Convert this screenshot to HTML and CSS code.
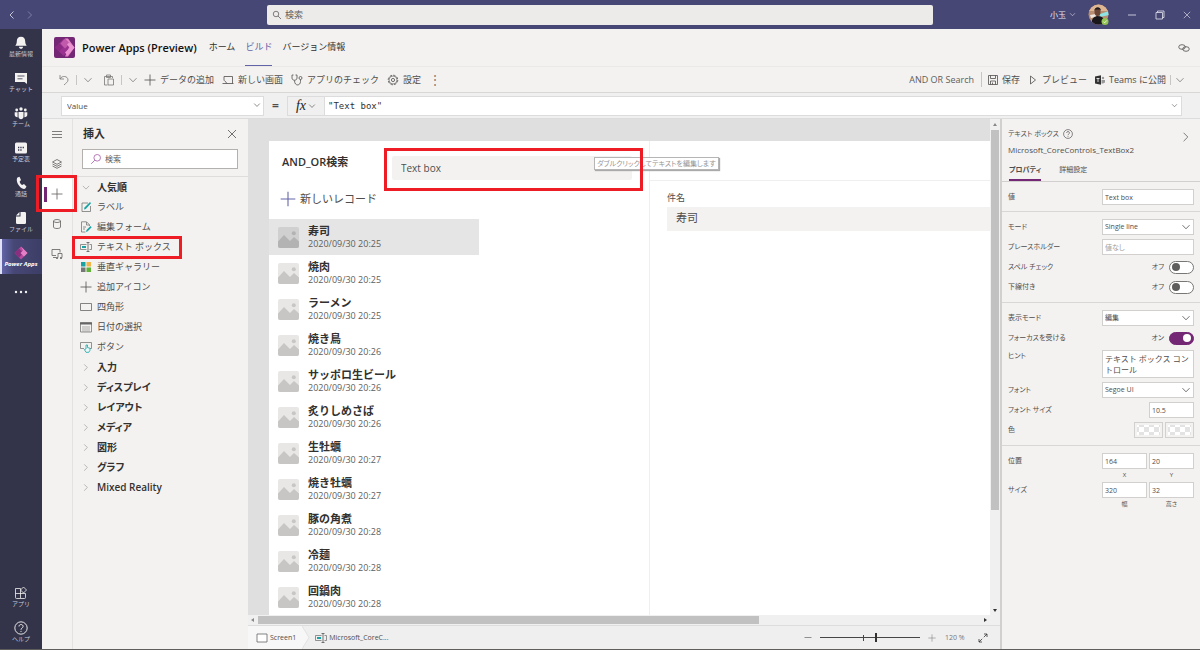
FILE: index.html
```html
<!DOCTYPE html>
<html lang="ja">
	<head>
		<meta charset="utf-8">
		<title>Power Apps (Preview)</title>
		<link rel="stylesheet" href="styles.css">
	</head>
	<body>
		<!-- shared icons -->
		<svg class="defs" aria-hidden="true">
			<symbol id="chevDown" viewBox="0 0 10 10"><path d="M1.5 3.2 5 6.8l3.5-3.6" fill="none" stroke="currentColor"/></symbol>
			<symbol id="chevRight" viewBox="0 0 10 10"><path d="M3 1.5 6.5 5 3 8.5" fill="none" stroke="currentColor"/></symbol>
			<symbol id="chevLeft" viewBox="0 0 10 10"><path d="M6.5 1.5 3 5l3.5 3.5" fill="none" stroke="currentColor"/></symbol>
			<symbol id="plus" viewBox="0 0 12 12"><path d="M6 .5v11M.5 6h11" fill="none" stroke="currentColor"/></symbol>
			<symbol id="close" viewBox="0 0 10 10"><path d="m1 1 8 8M9 1 1 9" fill="none" stroke="currentColor"/></symbol>
			<symbol id="search" viewBox="0 0 12 12"><circle cx="4.8" cy="4.8" r="3.3" fill="none" stroke="currentColor"/><path d="m7.2 7.2 3.6 3.6" stroke="currentColor"/></symbol>
			<symbol id="help" viewBox="0 0 12 12"><circle cx="6" cy="6" r="5.3" fill="none" stroke="currentColor"/><path d="M4.3 4.7c0-2.3 3.5-2.2 3.5 0C7.8 6 6 5.9 6 7.5M6 8.5v.9" fill="none" stroke="currentColor"/></symbol>
			<symbol id="textbox" viewBox="0 0 12 10"><path d="M6.5 2.5H.5v5h6M9.500 2.500h2v5h-2" fill="none" stroke="#777"/><path d="M6.5.5h3M6.5 9.5h3M8 .5v9" stroke="#555"/><path d="M2 4h4v2H2z" fill="#1ba3a3"/></symbol>
			<symbol id="picture" viewBox="0 0 21 21"><rect width="21" height="21" rx="2" fill="currentColor" opacity=".42"/><path d="M0 14.5 6 8l6 6 4-4 5 4.5V19q0 2-2 2H2q-2 0-2-2z" fill="currentColor"/><circle cx="15.800" cy="6.300" r="2" fill="currentColor"/></symbol>
		</svg>

		<header id="titlebar">
			<div class="history">
				<button aria-label="戻る"><svg class="ic10"><use href="#chevLeft"/></svg></button>
				<button class="dim" aria-label="進む"><svg class="ic10"><use href="#chevRight"/></svg></button>
			</div>
			<label class="topSearch">
				<svg class="ic10"><use href="#search"/></svg>
				<input type="text" placeholder="検索" aria-label="検索">
			</label>
			<div class="account">
				<button class="user">小玉 <svg class="ic7"><use href="#chevDown"/></svg></button>
				<svg class="avatar" viewBox="0 0 21 21">
					<clipPath id="face"><circle cx="10.5" cy="10.5" r="10"/></clipPath>
					<g clip-path="url(#face)">
						<path d="M0 0h21v21H0z" fill="#b98f74"/><path d="M0 0h21v7H0z" fill="#dfb692"/>
						<path d="M12 10l9-3v4l-9 2z" fill="#8ee4e4"/><path d="M2 11l6-1v3l-5 1z" fill="#efe7df"/>
						<path d="M4 21c-1-7 2-8 5-9 6 0 8 3 8 9z" fill="#19171c"/>
						<ellipse cx="9.5" cy="8" rx="3" ry="4" fill="#6b4637"/><path d="M6.300 7c0-5 7-5 6.500 0l-1-1.500H7.500z" fill="#201a1c"/>
					</g>
					<circle cx="17" cy="17.5" r="3.5" fill="#92c353"/><path d="m15.300 17.500 1.300 1.300 2.200-2.400" fill="none" stroke="#fff"/>
				</svg>
				<button aria-label="最小化"><svg class="ic10" viewBox="0 0 10 10"><path d="M1 5h8" stroke="currentColor"/></svg></button>
				<button aria-label="元に戻す"><svg class="ic10" viewBox="0 0 10 10"><path d="M1 2.500h6.500V9H1zM2.500 2.500V1H9v6.500H7.500" fill="none" stroke="currentColor"/></svg></button>
				<button aria-label="閉じる"><svg class="ic8"><use href="#close"/></svg></button>
			</div>
		</header>

		<div id="shell">
			<nav id="rail">
				<a href="#"><svg viewBox="0 0 14 14"><path d="M7 .8c-2.800 0-4.200 2-4.200 4.500 0 2-.5 3-1.500 4.500h11.400c-1-1.500-1.500-2.500-1.500-4.500C11.200 2.800 9.800.8 7 .8zM5 10.800h4c0 2.700-4 2.700-4 0z" fill="currentColor"/></svg>最新情報</a>
				<a href="#"><svg viewBox="0 0 14 14"><path d="M1 2h12v11l-2.500-2H1z" fill="currentColor"/><path d="M3.500 5h7M3.500 7.800h5" stroke="#33344a"/></svg>チャット</a>
				<a href="#"><svg viewBox="0 0 14 14"><g fill="currentColor"><circle cx="7" cy="3" r="1.700"/><circle cx="2.700" cy="4" r="1.400"/><circle cx="11.300" cy="4" r="1.400"/><path d="M4.500 6h5v4.500c0 3.500-5 3.500-5 0zM.7 6.300h2.900v5C1.800 11.300.7 10 .7 8.800zM10.400 6.300h2.900v2.500c0 1.200-1.100 2.500-2.900 2.500z"/></g></svg>チーム</a>
				<a href="#"><svg viewBox="0 0 14 14"><rect x="1" y="1.500" width="12" height="11" rx="1.500" fill="currentColor"/><path d="M4 6.500h6M4 9h4" stroke="#33344a" stroke-width="1.500" stroke-dasharray="1.300 1"/></svg>予定表</a>
				<a href="#"><svg viewBox="0 0 14 14"><path d="m3.500 1.500 2-.8 1.500 3.300-1.400 1.700c.5 1.500 1.300 2.600 2.600 3.300L10 8l2.500 2.500-1.200 2c-1.300 1-3.800 0-5.800-2.300C3 7.500 2 3.200 3.500 1.500z" fill="currentColor"/></svg>通話</a>
				<a href="#"><svg viewBox="0 0 14 14"><path d="M6.500 1h4.200q1.300 0 1.300 1.300v9.400q0 1.300-1.300 1.300H3.300Q2 13 2 11.700V5.500h4.500zM5.500 1v3.500H2z" fill="currentColor"/></svg>ファイル</a>
				<a href="#" class="active"><svg viewBox="0 0 14 14"><path d="M7 .5 13.500 7 7 13.500.5 7z" fill="#b94aa0"/><path d="M5 2.500 9.500 7 5 11.500.5 7z" fill="#8a2f80"/><path d="M7 .5 13.500 7 10 10.500 6.500 7 9 4.500z" fill="#e27fc5"/></svg>Power Apps</a>
				<a href="#" aria-label="その他"><svg viewBox="0 0 14 14"><g fill="currentColor"><circle cx="2" cy="11" r="1.200"/><circle cx="7" cy="11" r="1.200"/><circle cx="12" cy="11" r="1.200"/></g></svg></a>
				<div class="spacer"></div>
				<a href="#"><svg viewBox="0 0 14 14"><path d="M1.500 2.500h5v10h-4q-1 0-1-1zM1.500 7.500h10v4q0 1-1 1h-4M9.500 1l3 3-3 3-3-3z" fill="none" stroke="currentColor"/></svg>アプリ</a>
				<a href="#"><svg><use href="#help"/></svg>ヘルプ</a>
			</nav>

			<div id="app">
				<div id="appHeader">
					<svg class="logo" viewBox="0 0 21 21"><rect width="21" height="21" rx="2" fill="#742774"/><path d="M9.500 2 18 10.500 9.500 19 1 10.500z" fill="#9a3390"/><path d="m1 10.500 4-4 4 4-4 4z" fill="#8a2a82"/><path d="M11 1.500h3l6.500 9-6.500 9h-3l4-9z" fill="#e583c9"/><path d="m11 1.500 5 5-5 5-4.500-5z" fill="#c25aac"/><path d="m15 5.500 5.500 5-7 8-2.500-3 5-5-3-3z" fill="#eb94d2"/></svg>
					<h1>Power Apps (Preview)</h1>
					<nav class="tabs">
						<a href="#">ホーム</a>
						<a href="#" class="current">ビルド</a>
						<a href="#">バージョン情報</a>
					</nav>
					<button class="link" aria-label="リンクのコピー"><svg class="ic12" viewBox="0 0 12 12"><g fill="none" stroke="currentColor"><ellipse cx="4" cy="5" rx="3.300" ry="2.300"/><ellipse cx="8" cy="7" rx="3.300" ry="2.300"/></g></svg></button>
				</div>

				<div id="toolbar">
					<button aria-label="元に戻す"><svg class="ic12" viewBox="0 0 12 12"><path d="M2 1v4h4M2 5c2-4 8-3 8 1 0 2-2 3-4 5" fill="none" stroke="currentColor"/></svg></button>
					<i></i>
					<button aria-label="元に戻すの一覧"><svg class="ic10"><use href="#chevDown"/></svg></button>
					<button class="paste" aria-label="貼り付け"><svg class="ic12" viewBox="0 0 12 12"><path d="M4.500 11H1.500V2.500h8V4M3.500 1h4v2.500h-4zM5 5h5.500v6H5z" fill="none" stroke="currentColor"/></svg></button>
					<i></i>
					<button aria-label="貼り付けの一覧"><svg class="ic10"><use href="#chevDown"/></svg></button>
					<button class="cmd"><svg class="ic12"><use href="#plus"/></svg>データの追加</button>
					<button class="cmd"><svg class="ic12" viewBox="0 0 12 12"><path d="M2 6.500v-4h8.500v7M.5 9.500h4.500L2.500 6.500M5 9.500h6.500" fill="none" stroke="currentColor"/></svg>新しい画面</button>
					<button class="cmd"><svg class="ic12" viewBox="0 0 12 12"><path d="M2.500 1H1v3c0 3 5 3 5 0V1H4.500M3.500 6.500c0 6 6 5.500 6 1V5.500" fill="none" stroke="currentColor"/><circle cx="9.500" cy="4" r="1.500" fill="none" stroke="currentColor"/></svg>アプリのチェック</button>
					<button class="cmd"><svg class="ic12" viewBox="0 0 12 12"><circle cx="6" cy="6" r="4.800" fill="none" stroke="currentColor" stroke-dasharray="2.500 1.200"/><circle cx="6" cy="6" r="4" fill="none" stroke="currentColor" stroke-width=".6"/><circle cx="6" cy="6" r="1.600" fill="none" stroke="currentColor"/></svg>設定</button>
					<button class="more" aria-label="その他">⋮</button>
					<div class="spacer"></div>
					<span class="appName">AND OR Search</span>
					<i class="tall"></i>
					<button class="cmd"><svg class="ic10" viewBox="0 0 10 10"><path d="M.5.5h9v9h-9zM2.500.5v3h5v-3M2.500 9.500V6h5v3.500M4.500 7.500v2" fill="none" stroke="currentColor"/></svg>保存</button>
					<button class="cmd"><svg class="ic10" viewBox="0 0 10 10"><path d="M2.500 1v8l5-4z" fill="none" stroke="currentColor"/></svg>プレビュー</button>
					<button class="cmd publish"><svg class="ic10" viewBox="0 0 10 10"><path d="M0 1.500 6 .3v9.400L0 8.500z" fill="#333"/><path d="M1.500 3.500h3M3 3.500v3.500" stroke="#fff"/><circle cx="8" cy="3" r="1.200" fill="#999"/><path d="M6.500 5H10v2.500L8 8.500H6.500z" fill="#999"/></svg>Teams に公開</button>
					<i></i>
					<button aria-label="公開の一覧"><svg class="ic10"><use href="#chevDown"/></svg></button>
				</div>

				<div id="formulaBar">
					<span class="pick property"><select aria-label="プロパティ"><option>Value</option></select><svg class="ic8"><use href="#chevDown"/></svg></span>
					<b>=</b>
					<div class="formula">
						<button class="fx"><em>fx</em><svg class="ic8"><use href="#chevDown"/></svg></button>
						<input type="text" value="&quot;Text box&quot;" aria-label="数式">
						<svg class="ic7"><use href="#chevDown"/></svg>
					</div>
				</div>

				<div id="workspace">
					<nav id="tools">
						<button aria-label="メニュー"><svg class="ic12" viewBox="0 0 12 12"><path d="M1 3.500h10M1 6.500h10M1 9.500h10" stroke="currentColor"/></svg></button>
						<button aria-label="ツリー ビュー"><svg class="ic12" viewBox="0 0 12 12"><path d="M6 1.500 10.500 4 6 6.300 1.500 4zM1.500 6 6 8.300 10.500 6M1.500 8 6 10.300 10.500 8" fill="none" stroke="currentColor"/></svg></button>
						<button class="active" aria-label="挿入"><svg class="ic12"><use href="#plus"/></svg><span class="mark markPlus"></span></button>
						<button aria-label="データ"><svg class="ic12" viewBox="0 0 12 12"><path d="M2.500 3v6c0 2 7 2 7 0V3" fill="none" stroke="currentColor"/><ellipse cx="6" cy="3" rx="3.500" ry="1.500" fill="none" stroke="currentColor"/></svg></button>
						<button aria-label="メディア"><svg class="ic12" viewBox="0 0 12 12"><path d="M5 7.500H1v-6h8v3M2 9.500h3M7 9.500v-4h4v4" fill="none" stroke="currentColor"/><circle cx="6" cy="10" r="1" fill="currentColor"/><circle cx="10" cy="10" r="1" fill="currentColor"/></svg></button>
					</nav>

					<aside id="insertPanel">
						<div class="panelHead">
							<h2>挿入</h2>
							<button aria-label="閉じる"><svg class="ic10"><use href="#close"/></svg></button>
						</div>
						<label class="panelSearch">
							<svg class="ic12 flip"><use href="#search"/></svg>
							<input type="text" placeholder="検索" aria-label="コントロールの検索">
						</label>
						<ul>
							<li class="group"><button><svg><use href="#chevDown"/></svg>人気順</button></li>
							<li><button><svg viewBox="0 0 12 12"><path d="M8 2H2v8.500h8.500V5" fill="none" stroke="#777"/><path d="m4 8.500.5-2L10 1l1 1.200L5.800 8z" fill="#1ba3a3"/></svg>ラベル</button></li>
							<li><button><svg viewBox="0 0 12 12"><path d="M5.500 11H1.500V.8h5l3 3V5M6.500 1v3h3M3 6h3M3 8h2" fill="none" stroke="#777"/><path d="m6 11 .5-2L10.500 5l1.200 1.200-4 4z" fill="#1ba3a3"/></svg>編集フォーム</button></li>
							<li><button><svg><use href="#textbox"/></svg>テキスト ボックス</button><span class="mark markItem"></span></li>
							<li><button><svg viewBox="0 0 12 12"><path d="M1 1h4.500v4.500H1z" fill="#1ba3a3"/><path d="M6.500 1H11v4.500H6.500z" fill="#f4b548"/><path d="M1 6.500h4.500V11H1z" fill="#777"/><path d="M6.500 6.500H11V11H6.500z" fill="#5fb336"/></svg>垂直ギャラリー</button></li>
							<li><button><svg><use href="#plus"/></svg>追加アイコン</button></li>
							<li><button><svg viewBox="0 0 12 12"><path d="M.5 2.500h11v7H.5z" fill="none" stroke="#666"/></svg>四角形</button></li>
							<li><button><svg viewBox="0 0 12 12"><path d="M.5 1.500h11v9.500H.5z" fill="none" stroke="#777"/><path d="M0 2.500h12" stroke="#666" stroke-width="2"/><path d="M3 5v6M5 5v6M7 5v6M9 5v6" stroke="#999"/></svg>日付の選択</button></li>
							<li><button><svg viewBox="0 0 12 12"><path d="M4 7.500H.5v-6h11v6H10" fill="none" stroke="#777"/><path d="M6 8V4h1.500v2.500l2.500.8v2L8.800 11.300H6L4.300 8.500z" fill="#e9f8f8" stroke="#1ba3a3"/></svg>ボタン</button></li>
							<li class="group"><button><svg><use href="#chevRight"/></svg>入力</button></li>
							<li class="group"><button><svg><use href="#chevRight"/></svg>ディスプレイ</button></li>
							<li class="group"><button><svg><use href="#chevRight"/></svg>レイアウト</button></li>
							<li class="group"><button><svg><use href="#chevRight"/></svg>メディア</button></li>
							<li class="group"><button><svg><use href="#chevRight"/></svg>図形</button></li>
							<li class="group"><button><svg><use href="#chevRight"/></svg>グラフ</button></li>
							<li class="group"><button><svg><use href="#chevRight"/></svg>Mixed Reality</button></li>
						</ul>
					</aside>

					<main id="stage">
						<div id="canvas">
							<div class="screen">
								<section class="listPane">
									<div class="screenHead">
										<h3>AND_OR検索</h3>
										<div class="boxWrap">
											<input type="text" value="Text box" aria-label="Text box">
											<span class="tip">ダブルクリックしてテキストを編集します</span>
											<span class="mark markBox"></span>
										</div>
									</div>
									<button class="newRecord"><svg><use href="#plus"/></svg>新しいレコード</button>
									<ul class="records">
										<li class="selected"><svg><use href="#picture"/></svg><div><b>寿司</b><span>2020/09/30 20:25</span></div></li>
										<li><svg><use href="#picture"/></svg><div><b>焼肉</b><span>2020/09/30 20:25</span></div></li>
										<li><svg><use href="#picture"/></svg><div><b>ラーメン</b><span>2020/09/30 20:25</span></div></li>
										<li><svg><use href="#picture"/></svg><div><b>焼き鳥</b><span>2020/09/30 20:26</span></div></li>
										<li><svg><use href="#picture"/></svg><div><b>サッポロ生ビール</b><span>2020/09/30 20:26</span></div></li>
										<li><svg><use href="#picture"/></svg><div><b>炙りしめさば</b><span>2020/09/30 20:26</span></div></li>
										<li><svg><use href="#picture"/></svg><div><b>生牡蠣</b><span>2020/09/30 20:27</span></div></li>
										<li><svg><use href="#picture"/></svg><div><b>焼き牡蠣</b><span>2020/09/30 20:27</span></div></li>
										<li><svg><use href="#picture"/></svg><div><b>豚の角煮</b><span>2020/09/30 20:28</span></div></li>
										<li><svg><use href="#picture"/></svg><div><b>冷麺</b><span>2020/09/30 20:28</span></div></li>
										<li><svg><use href="#picture"/></svg><div><b>回鍋肉</b><span>2020/09/30 20:28</span></div></li>
									</ul>
								</section>
								<section class="formPane">
									<div class="formHead"></div>
									<div class="field">
										<label for="subject">件名</label>
										<input type="text" id="subject" value="寿司">
									</div>
								</section>
							</div>
							<div class="vbar"><span class="up"></span><div class="thumb"></div><span class="down"></span></div>
						</div>
						<div class="hbar"><span class="left"></span><div class="thumb"></div><span class="right"></span></div>
						<footer id="statusBar">
							<a href="#" class="crumb first"><svg viewBox="0 0 12 10"><path d="M1 1h10v8H1z" fill="#fff" stroke="#666"/></svg>Screen1</a>
							<svg class="crumbEnd" viewBox="0 0 8 23" preserveAspectRatio="none"><path d="M0 0l7 11.500L0 23z" fill="#f7f7f7"/><path d="m0 0 7 11.500L0 23" fill="none" stroke="#ddd"/></svg>
							<a href="#" class="crumb"><svg><use href="#textbox"/></svg>Microsoft_CoreC...</a>
							<div class="spacer"></div>
							<button aria-label="縮小"><svg class="ic8" viewBox="0 0 8 8"><path d="M.5 3.500h7" stroke="currentColor"/></svg></button>
							<div class="zoom"><input type="range" min="0" max="100" value="56" aria-label="ズーム"></div>
							<button aria-label="拡大"><svg class="ic8"><use href="#plus"/></svg></button>
							<span class="percent">120 %</span>
							<button class="fit" aria-label="ウィンドウに合わせる"><svg class="ic10" viewBox="0 0 10 10"><path d="M6 1h3v3M9 1 5.800 4.200M4 9H1V6M1 9l3.200-3.200" fill="none" stroke="#333"/></svg></button>
						</footer>
					</main>

					<aside id="props">
						<div class="propsHead">
							<div class="kind">テキスト ボックス <svg class="ic10"><use href="#help"/></svg></div>
							<div class="name">Microsoft_CoreControls_TextBox2</div>
							<button aria-label="折りたたむ"><svg class="ic12"><use href="#chevRight"/></svg></button>
						</div>
						<div class="propsTabs">
							<button class="current">プロパティ</button>
							<button>詳細設定</button>
						</div>
						<div class="section tight">
							<div class="row"><label for="pValue">値</label><input type="text" id="pValue" value="Text box"></div>
						</div>
						<div class="section">
							<div class="row"><label for="pMode">モード</label><span class="pick"><select id="pMode"><option>Single line</option></select><svg class="ic10"><use href="#chevDown"/></svg></span></div>
							<div class="row"><label for="pHolder">プレースホルダー</label><input type="text" id="pHolder" placeholder="値なし"></div>
							<div class="row"><label for="pSpell">スペル チェック</label><span class="state">オフ</span><input type="checkbox" id="pSpell"></div>
							<div class="row"><label for="pUnder">下線付き</label><span class="state">オフ</span><input type="checkbox" id="pUnder"></div>
						</div>
						<div class="section">
							<div class="row"><label for="pDisplay">表示モード</label><span class="pick"><select id="pDisplay"><option>編集</option></select><svg class="ic10"><use href="#chevDown"/></svg></span></div>
							<div class="row"><label for="pFocus">フォーカスを受ける</label><span class="state">オン</span><input type="checkbox" id="pFocus" checked></div>
							<div class="row hint"><label for="pHint">ヒント</label><textarea id="pHint">テキスト ボックス コントロール</textarea></div>
							<div class="row"><label for="pFont">フォント</label><span class="pick"><select id="pFont"><option>Segoe UI</option></select><svg class="ic10"><use href="#chevDown"/></svg></span></div>
							<div class="row"><label for="pSize">フォント サイズ</label><input type="text" class="half" id="pSize" value="10.5"></div>
							<div class="row"><span class="label">色</span><button class="swatch" aria-label="文字の色"></button><button class="swatch" aria-label="塗りつぶしの色"></button></div>
						</div>
						<div class="section last">
							<div class="row"><span class="label">位置</span><input type="text" class="half" id="pX" value="164"><input type="text" class="half" id="pY" value="20"></div>
							<div class="captions"><label for="pX">X</label><label for="pY">Y</label></div>
							<div class="row"><span class="label">サイズ</span><input type="text" class="half" id="pW" value="320"><input type="text" class="half" id="pH" value="32"></div>
							<div class="captions"><label for="pW">幅</label><label for="pH">高さ</label></div>
						</div>
					</aside>
				</div>
			</div>
		</div>
	</body>
</html>
```
FILE: styles.css
```css
*{
	box-sizing:border-box;
}

body{
	margin:0;
	height:100vh;
	display:flex;
	flex-direction:column;
	overflow:hidden;
	background:#f3f2f1;
	border-bottom:1px solid #605e5c;
	color:#504e4c;
	font:9px/12px "Open Sans", "Noto Sans CJK JP", sans-serif;
}

button, input, select, textarea{
	font:inherit;
	color:inherit;
	margin:0;
	padding:0;
	border:0;
	border-radius:0;
	background:none;
	outline:none;
	min-width:0;
}

button{
	display:flex;
	align-items:center;
	justify-content:center;
	white-space:nowrap;
}

select{
	appearance:none;
}

a{
	color:inherit;
	text-decoration:none;
}

h1, h2, h3, ul{
	margin:0;
	padding:0;
	list-style:none;
}

svg{
	flex:none;
	stroke-width:.8px;
}

.defs{
	display:none;
}

.ic7{ width:7px; height:7px; }
.ic8{ width:8px; height:8px; }
.ic10{ width:10px; height:10px; }
.ic12{ width:12px; height:12px; }

.flip{
	transform:scaleX(-1);
}

.spacer{
	flex:1;
}

/* red call-out frames */
.mark{
	position:absolute;
	border:3px solid #ee1c25;
	pointer-events:none;
	z-index:5;
}

/* title bar */
#titlebar{
	flex:none;
	height:29px;
	display:grid;
	grid-template-columns:1fr 666px 1fr;
	align-items:center;
	background:#464775;
	color:#e4e4f0;
}

.history{
	display:flex;
	gap:8px;
	padding-left:7px;
}

.history .dim{
	color:#8b8cb5;
}

.topSearch{
	display:flex;
	align-items:center;
	gap:3px;
	height:20px;
	padding:0 5px;
	border-radius:2px;
	background:#edebe9;
	color:#484644;
}

.topSearch input{
	flex:1;
}

input::placeholder{
	color:#605e5c;
	opacity:1;
}

.account{
	display:flex;
	align-items:center;
	justify-content:flex-end;
	gap:18px;
	padding-right:9px;
}

.user{
	gap:3px;
	font-size:8px;
	margin-right:-6px;
}

.avatar{
	width:21px;
	height:21px;
}

#shell{
	flex:1;
	display:flex;
	min-height:0;
}

/* teams rail */
#rail{
	flex:none;
	width:42px;
	display:flex;
	flex-direction:column;
	background:#33344a;
	color:#c8c8d4;
	font-size:6px;
	line-height:8px;
}

#rail a{
	height:35px;
	display:flex;
	flex-direction:column;
	align-items:center;
	padding-top:7px;
}

#rail svg{
	width:14px;
	height:14px;
	color:#f3f2f1;
}

#rail .active{
	background:linear-gradient(90deg, #6264a7, #464775 30%, #3d3e66);
	border-left:2px solid #e2e2f6;
	padding-right:2px;
	color:#fff;
	font-weight:bold;
	font-style:italic;
	white-space:nowrap;
}

#app{
	flex:1;
	min-width:0;
	display:flex;
	flex-direction:column;
}

/* app header */
#appHeader{
	flex:none;
	height:38px;
	display:flex;
	align-items:center;
	padding:0 10px 0 12px;
	border-bottom:1px solid #ebe9e8;
}

.logo{
	width:21px;
	height:21px;
}

h1{
	margin-left:7px;
	color:#111;
	font-size:11px;
	font-weight:600;
}

.tabs{
	display:flex;
	align-self:stretch;
	gap:10px;
	margin-left:12px;
	flex:1;
}

.tabs a{
	display:flex;
	align-items:center;
	border-bottom:1px solid transparent;
	color:#323130;
}

.tabs .current{
	color:#6264a7;
	border-color:#6264a7;
}

/* toolbar */
#toolbar{
	flex:none;
	height:26px;
	display:flex;
	align-items:center;
	gap:4px;
	padding:0 15px 0 16px;
	border-bottom:1px solid #d8d7d6;
	color:#797775;
}

#toolbar i{
	width:1px;
	height:10px;
	margin:0 2px;
	background:#c8c6c4;
}

#toolbar .tall{
	height:15px;
	margin:0 0 0 3px;
}

.paste{
	margin-left:6px;
}

.cmd{
	gap:4px;
	margin:0 2px;
	color:#504e4c;
}

#toolbar .publish{
	margin-right:0;
}

#toolbar .publish + i{
	margin:0;
}

.appName{
	color:#605e5c;
}

.more{
	width:16px;
	font-size:12px;
}

/* formula bar */
#formulaBar{
	flex:none;
	height:26px;
	display:flex;
	align-items:center;
	padding:0 18px 0 19px;
	background:#f0f0f0;
	border-bottom:1px solid #dcdcdc;
}

.pick{
	display:flex;
	position:relative;
}

.pick select{
	width:100%;
}

.pick svg{
	position:absolute;
	right:2px;
	top:50%;
	margin-top:-5px;
	pointer-events:none;
}

.property{
	width:203px;
	height:20px;
	padding:0 5px;
	border:1px solid #dcdcdc;
	background:#fff;
	font-size:8px;
}

#formulaBar b{
	width:23px;
	text-align:center;
	font-size:12px;
}

.formula{
	flex:1;
	height:20px;
	display:flex;
	align-items:center;
	padding-right:3px;
	border:1px solid #dcdcdc;
	background:#fff;
}

.formula input{
	flex:1;
	padding-left:3px;
	color:#323130;
	font:9px/12px "DejaVu Sans Mono", monospace;
}

.fx{
	width:37px;
	height:18px;
	gap:2px;
	border-right:1px solid #dcdcdc;
	background:#f0f0f0;
}

.fx em{
	color:#222;
	font:italic 14px/16px "Liberation Serif", serif;
}

#workspace{
	flex:1;
	min-height:0;
	display:flex;
}

/* narrow tool strip */
#tools{
	flex:none;
	width:31px;
	border-right:1px solid #e3e2e1;
	color:#605e5c;
}

#tools button{
	position:relative;
	width:30px;
	height:30px;
}

#tools .active{
	background:#fff;
}

#tools .active::before{
	content:"";
	position:absolute;
	left:2px;
	top:8px;
	width:3px;
	height:15px;
	background:#742774;
}

.markPlus{
	left:-6px;
	right:-5px;
	top:-4px;
	bottom:-3px;
}

/* insert panel */
#insertPanel{
	flex:none;
	width:175px;
}

.panelHead{
	display:flex;
	align-items:center;
	justify-content:space-between;
	height:30px;
	padding:0 11px 0 10px;
}

h2{
	color:#323130;
	font-size:11px;
	font-weight:bold;
}

.panelSearch{
	display:flex;
	align-items:center;
	gap:3px;
	height:20px;
	margin:0 10px 7px 9px;
	padding:0 7px;
	border:1px solid #b3b0ad;
	background:#fff;
	color:#a65aa6;
	font-size:8px;
}

.panelSearch input{
	flex:1;
	color:#484644;
}

#insertPanel ul{
	border-top:1px solid #dedddc;
}

#insertPanel li{
	position:relative;
	height:20px;
}

#insertPanel li button{
	height:20px;
	gap:5px;
	padding-left:7px;
}

#insertPanel li svg{
	width:12px;
	height:12px;
}

#insertPanel .group{
	color:#323130;
	font-size:10px;
	font-weight:600;
	font-feature-settings:"palt";
}

#insertPanel .group svg{
	width:12px;
	height:9px;
	color:#a19f9d;
}

.markItem{
	left:-1px;
	top:-1px;
	width:110px;
	height:23px;
}

/* canvas */
#stage{
	flex:1;
	min-width:0;
	display:flex;
	flex-direction:column;
}

#canvas{
	flex:1;
	min-height:0;
	display:flex;
	background:#dfdfdf;
}

.screen{
	flex:1;
	display:flex;
	margin:22px 0 0 21px;
	background:#fff;
	overflow:hidden;
}

.listPane{
	flex:none;
	width:381px;
	border-right:1px solid #f0efee;
}

.screenHead{
	display:flex;
	align-items:flex-start;
	height:44px;
	padding:15px 17px 0 13px;
}

h3{
	width:110px;
	color:#323130;
	font-size:11px;
	font-weight:600;
}

.boxWrap{
	position:relative;
	flex:1;
}

.boxWrap input{
	width:100%;
	height:24px;
	padding:0 9px;
	border-radius:2px;
	background:#f3f2f1;
	font-size:10px;
}

.tip{
	position:absolute;
	left:202px;
	top:1px;
	padding:0 2px;
	border:1px solid #b5b5b5;
	background:#fff;
	box-shadow:1px 1px 1px #aaa;
	color:#979593;
	font-size:7px;
	line-height:11px;
	white-space:nowrap;
	font-feature-settings:"palt";
	z-index:4;
}

.markBox{
	left:-8px;
	right:-11px;
	top:-8px;
	height:43px;
}

.newRecord{
	height:28px;
	margin-bottom:6px;
	padding-left:11px;
	gap:4px;
	font-size:11px;
}

.newRecord svg{
	width:16px;
	height:16px;
	color:#6264a7;
}

.records li{
	display:flex;
	align-items:center;
	gap:9px;
	width:210px;
	height:36px;
	padding-left:9px;
	color:#c8c6c4;
}

.records .selected{
	background:#e5e5e5;
	color:#b3b3b3;
}

.records svg{
	width:21px;
	height:21px;
}

.records b, .records span{
	display:block;
}

.records b{
	color:#323130;
	font-size:11px;
	line-height:14px;
}

.records span{
	color:#605e5c;
}

.formPane{
	flex:1;
}

.formHead{
	height:40px;
	border-bottom:1px solid #f0efee;
}

.field{
	padding:11px 0 0 17px;
}

.field label{
	display:block;
	margin-bottom:3px;
}

.field input{
	width:100%;
	height:24px;
	padding:0 9px 4px;
	background:#f3f2f1;
	font-size:11px;
}

/* scroll bars */
.vbar, .hbar{
	flex:none;
	display:flex;
	align-items:center;
	background:#f0f0f0;
}

.vbar{
	width:10px;
	flex-direction:column;
}

.hbar{
	height:11px;
	border-bottom:1px solid #ddd;
}

.vbar .thumb{
	width:8px;
	flex:0 1 380px;
	margin-bottom:auto;
	background:#c1c1c1;
}

.hbar .thumb{
	height:8px;
	flex:0 1 501px;
	margin-right:auto;
	background:#c1c1c1;
}

.vbar span, .hbar span{
	border:2px solid transparent;
	margin:3px;
}

.vbar .up{
	border-bottom:3px solid #8a8886;
	border-top:0;
	margin:4px 0;
}

.vbar .down{
	border-top:3px solid #333;
	border-bottom:0;
}

.hbar .left{
	border-right:3px solid #8a8886;
	border-left:0;
	margin-right:4px;
}

.hbar .right{
	border-left:3px solid #333;
	border-right:0;
	margin-right:13px;
}

/* status bar */
#statusBar{
	flex:none;
	height:23px;
	display:flex;
	align-items:center;
	padding-right:12px;
	background:#efefef;
	font-size:7px;
}

#statusBar button{
	color:#797775;
}

.crumb{
	display:flex;
	align-items:center;
	gap:2px;
	height:23px;
	padding-left:5px;
}

.crumb svg{
	width:12px;
	height:10px;
}

.first{
	padding:0 6px 0 8px;
	background:#f7f7f7;
}

.crumbEnd{
	width:8px;
	height:23px;
}

.zoom{
	position:relative;
	width:100px;
	height:12px;
	margin:0 8px;
}

.zoom::before{
	content:"";
	position:absolute;
	left:43px;
	top:3px;
	width:1px;
	height:6px;
	background:#484644;
}

.zoom input{
	display:block;
	appearance:none;
	width:100%;
	height:12px;
}

.zoom input::-webkit-slider-runnable-track{
	height:1px;
	background:#484644;
}

.zoom input::-webkit-slider-thumb{
	appearance:none;
	width:2px;
	height:9px;
	margin-top:-4px;
	background:#323130;
}

.percent{
	width:42px;
	padding-left:9px;
	color:#797775;
}

/* properties */
#props{
	flex:none;
	width:200px;
	border-left:2px solid #d2d0ce;
	font-size:7px;
	font-feature-settings:"palt";
}

.propsHead{
	display:grid;
	grid-template-columns:1fr 12px;
	align-items:center;
	padding:8px 8px 0 6px;
}

.kind{
	display:flex;
	align-items:center;
	gap:4px;
	height:14px;
}

.name{
	grid-column:1;
	height:17px;
	line-height:17px;
	font-size:8px;
}

.propsHead button{
	grid-column:2;
	grid-row:1 / 3;
	height:20px;
	align-self:start;
	color:#797775;
}

.propsTabs{
	display:flex;
	gap:18px;
	height:24px;
	padding-left:7px;
	border-bottom:1px solid #d2d0ce;
}

.propsTabs button{
	padding-top:2px;
	border-bottom:2px solid transparent;
}

.propsTabs .current{
	border-color:#742774;
	font-weight:600;
}

.section{
	padding:5px 6px;
	border-bottom:1px solid #d8d7d6;
}

.tight{
	padding-bottom:4px;
}

.last{
	border-bottom:0;
}

.row{
	display:flex;
	align-items:center;
	gap:2px;
	height:20px;
}

.row label, .row .label{
	flex:1;
}

.row input, .row textarea, .row .pick{
	width:92px;
	height:16px;
	padding:0 2px;
	border:1px solid #d2d0ce;
	background:#fff;
}

.row .half{
	width:45px;
}

.row input::placeholder{
	color:#a19f9d;
}

.state{
	margin-right:3px;
}

.row input[type=checkbox]{
	appearance:none;
	width:25px;
	height:13px;
	padding:1px;
	border:1px solid #797775;
	border-radius:7px;
	display:flex;
	align-items:center;
}

.row input[type=checkbox]::before{
	content:"";
	width:8px;
	height:8px;
	margin-left:1px;
	border-radius:50%;
	background:#605e5c;
}

.row input[type=checkbox]:checked{
	border-color:#742774;
	background:#742774;
	justify-content:flex-end;
}

.row input[type=checkbox]:checked::before{
	margin-right:1px;
	background:#fff;
}

.hint{
	height:32px;
	align-items:flex-start;
	padding-top:2px;
}

.row textarea{
	height:28px;
	padding:2px;
	font-size:8px;
	line-height:11px;
	font-feature-settings:normal;
	resize:none;
	overflow:hidden;
}

.swatch{
	width:29px;
	height:16px;
	border:1px solid #d2d0ce;
	padding:2px;
	background:repeating-conic-gradient(#e3e3e3 0 25%, #fff 0 50%) 2px 2px / 10px 10px content-box #fff;
}

.captions{
	display:flex;
	justify-content:flex-end;
	gap:2px;
	height:9px;
	font-size:6px;
	line-height:8px;
}

.captions label{
	width:45px;
	text-align:center;
}
```
